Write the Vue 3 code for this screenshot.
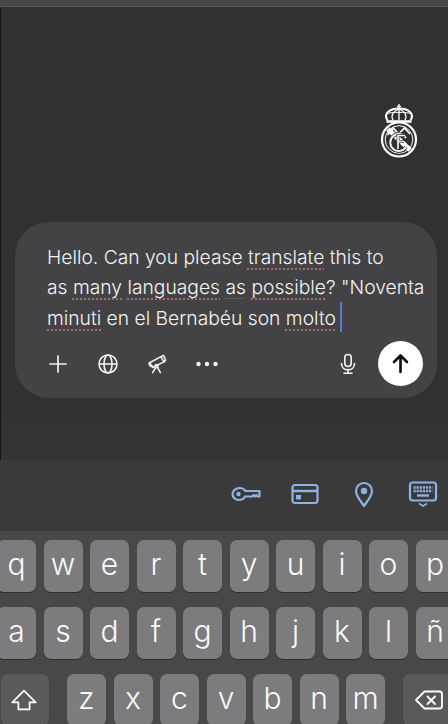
<script setup>
const rowOne = ['q', 'w', 'e', 'r', 't', 'y', 'u', 'i', 'o', 'p']
const rowTwo = ['a', 's', 'd', 'f', 'g', 'h', 'j', 'k', 'l', 'ñ']
const rowThree = ['z', 'x', 'c', 'v', 'b', 'n', 'm']
</script>

<template>
  <div class="screen">
    <div class="top-band"></div>

    <div class="stage">
      <svg class="crest" width="40" height="54" viewBox="0 0 40 54" fill="none" stroke="#fff">
        <!-- crown -->
        <path d="M20 0v5M18 2.500h4" stroke-width="1.400" />
        <path d="M8.500 16.500C4 9 11 4.500 20 4.500S36 9 31.500 16.500" stroke-width="2" />
        <path d="M14 16c-2.500-4.500 0-8.500 6-11 6 2.500 8.500 6.500 6 11M20 5v11" stroke-width="1.300" />
        <path d="M8 9.500c4-1.500 20-1.500 24 0" stroke-width="1" />
        <path d="M7.500 17.500h25" stroke-width="2.600" />
        <!-- badge -->
        <circle cx="20" cy="35.500" r="17" stroke-width="2.200" />
        <circle cx="20" cy="35.500" r="13.800" stroke-width="1" />
        <path d="M9 25l22 21" stroke-width="5" />
        <path d="M8.500 31l6-7 5 6 6-6 5.500 6" stroke-width="1.700" />
        <path d="M27 34a8.500 8.500 0 1 0 0 9" stroke="#323132" stroke-width="3.400" />
        <path d="M27 34a8.500 8.500 0 1 0 0 9" stroke-width="1.800" />
        <path d="M19 45V31.500h7M19 37.500h6" stroke="#323132" stroke-width="3" />
        <path d="M19 45V31.500h7M19 37.500h6" stroke-width="1.600" />
      </svg>

      <div class="composer">
        <p class="message">Hello. Can you please <span class="typo">translate</span> this to<br />as <span class="typo">many</span> <span class="typo">languages</span> <span class="hint">as</span> <span class="typo">possible</span>? "Noventa<br /><span class="typo">minuti</span> en el Bernabéu son <span class="typo">molto</span><i class="caret"></i></p>

        <div class="tools">
          <svg width="24" height="24" viewBox="0 0 24 24" fill="none" stroke="#f2f2f2" stroke-width="1.700" stroke-linecap="round">
            <path d="M12 4v16M4 12h16" />
          </svg>
          <svg width="24" height="24" viewBox="0 0 24 24" fill="none" stroke="#f2f2f2" stroke-width="1.600">
            <circle cx="12" cy="12" r="9" />
            <ellipse cx="12" cy="12" rx="4" ry="9" />
            <path d="M3 12h18" />
          </svg>
          <svg width="24" height="24" viewBox="0 0 24 24" fill="none" stroke="#f2f2f2" stroke-width="1.800" stroke-linejoin="round" stroke-linecap="round">
            <g transform="translate(12 12) scale(.86) translate(-12 -12)">
              <path d="M3.500 10.500l13-7 3.500 6-13 6.500z" />
              <path d="M16.500 3.500l3-1.500 2.500 5.500-2 2" />
              <path d="M3.500 10.500l-1 .8 2 3.500 2-.3" />
              <circle cx="11.500" cy="14.500" r="1.800" />
              <path d="M10.500 16l-3.500 6M12.500 16l3.500 6" />
            </g>
          </svg>
          <svg width="24" height="24" viewBox="0 0 24 24" fill="#f2f2f2">
            <circle cx="3.500" cy="12" r="2.200" />
            <circle cx="12" cy="12" r="2.200" />
            <circle cx="20.500" cy="12" r="2.200" />
          </svg>

          <svg class="mic" width="24" height="24" viewBox="0 0 24 24" fill="none" stroke="#f2f2f2" stroke-width="1.600" stroke-linecap="round">
            <rect x="8.800" y="2.500" width="6.400" height="12" rx="3.200" />
            <path d="M5.500 11.500c0 4 2.800 6.300 6.500 6.300s6.500-2.300 6.500-6.300M12 18v3M8 21.300h8" />
          </svg>
          <button class="send">
            <svg width="24" height="24" viewBox="0 0 24 24" fill="none" stroke="#0c0c0c" stroke-width="2.600" stroke-linecap="round" stroke-linejoin="round">
              <path d="M11.500 20V3.500M5 10L11.500 3.500 18 10" />
            </svg>
          </button>
        </div>
      </div>
    </div>

    <div class="autofill">
      <svg width="30" height="30" viewBox="0 0 30 30" fill="none" stroke="#8fb3e2" stroke-width="2.200" stroke-linejoin="round">
        <path d="M8.500 9c3 0 5 1.300 6 3h14v5.500h-2l-1.200-1.500-1.300 1.500-1.500-1.500-1.500 1.500h-7c-1 2-3 3.500-6 3.500-3.800 0-6.500-2.800-6.500-6S4.700 9 8.500 9z" />
        <circle cx="7.500" cy="15" r="2.200" fill="#8fb3e2" stroke="none" />
      </svg>
      <svg width="30" height="30" viewBox="0 0 30 30" fill="none" stroke="#8fb3e2" stroke-width="2.200">
        <rect x="2.500" y="6" width="25" height="18" rx="2.500" />
        <path d="M2.500 12h25" stroke-width="2.400" />
        <rect x="6" y="16" width="5" height="4.500" fill="#8fb3e2" stroke="none" />
      </svg>
      <svg width="30" height="30" viewBox="0 0 30 30" fill="none" stroke="#8fb3e2" stroke-width="2.200" stroke-linejoin="round">
        <path d="M15 27c-3.500-5.300-8-9.700-8-15a8 8 0 0 1 16 0c0 5.300-4.500 9.700-8 15z" />
        <circle cx="15" cy="12" r="3.200" fill="#8fb3e2" stroke="none" />
      </svg>
      <svg width="30" height="30" viewBox="0 0 30 30" fill="none" stroke="#8fb3e2" stroke-width="2.200">
        <rect x="2" y="3.500" width="26" height="18" rx="2.500" />
        <path d="M5.500 8.500h19M5.500 12h19" stroke-width="2.600" stroke-dasharray="2.200 .9" />
        <path d="M9 16.500h12" stroke-width="2.400" />
        <path d="M11 24.500l4 2.500 4-2.500" stroke-width="1.600" />
      </svg>
    </div>

    <div class="keyboard">
      <div class="row row-one">
        <div v-for="k in rowOne" :key="k" class="key">{{ k }}</div>
      </div>
      <div class="row row-one">
        <div v-for="k in rowTwo" :key="k" class="key">{{ k }}</div>
      </div>
      <div class="row row-three">
        <div class="key action shift">
          <svg width="28" height="28" viewBox="0 0 30 30" fill="none" stroke="#fff" stroke-width="1.800" stroke-linejoin="round">
            <path d="M15 5L2.500 17.500h6.500v7.500h12v-7.500h6.500z" />
          </svg>
        </div>
        <div v-for="k in rowThree" :key="k" class="key">{{ k }}</div>
        <div class="key action erase">
          <svg width="30" height="24" viewBox="0 0 30 24" fill="none" stroke="#fff" stroke-width="1.800" stroke-linejoin="round" stroke-linecap="round">
            <path d="M10.500 3.500h15a2.500 2.500 0 0 1 2.500 2.500v12a2.500 2.500 0 0 1-2.500 2.500h-15L2 12z" />
            <path d="M13.500 8.500l7.500 7.500M21 8.500L13.500 16" />
          </svg>
        </div>
      </div>
    </div>
  </div>
</template>

<style scoped>
.screen {
  width: 448px;
  height: 724px;
  overflow: hidden;
  display: flex;
  flex-direction: column;
  background: #323132;
  font-family: Inter, "Liberation Sans", sans-serif;
}
.top-band {
  height: 6px;
  flex: none;
  background: #47484c;
  border-bottom: 1px solid #58595c;
}
.stage {
  height: 453px;
  flex: none;
  display: flex;
  flex-direction: column;
  border-left: 1px solid #141414;
  background: linear-gradient(#323132 85%, #353435);
}
.crest {
  flex: none;
  align-self: flex-end;
  margin: 97px 29px 0 0;
}
.composer {
  width: 422px;
  height: 176px;
  flex: none;
  box-sizing: border-box;
  margin: 64px 0 0 14px;
  padding: 20px 14px 0 31px;
  border-radius: 34px;
  background: #434244;
}
.message {
  margin: 0 0 0 1px;
  font-size: 19.250px;
  font-weight: 350;
  line-height: 30px;
  color: #f4f4f4;
  white-space: nowrap;
}
.typo {
  text-decoration: underline dotted #a86c6d 1.500px;
  text-underline-offset: 3.500px;
}
.hint {
  text-decoration: underline dotted #77777b 1px;
  text-underline-offset: 3.500px;
}
.caret {
  display: inline-block;
  width: 2px;
  height: 30px;
  margin-left: 4px;
  vertical-align: -7px;
  background: #5c7bd3;
}
.tools {
  display: flex;
  align-items: center;
  gap: 25.500px;
  margin-top: 8px;
}
.mic {
  margin-left: auto;
  margin-right: -7.500px;
}
.send {
  width: 45px;
  height: 45px;
  display: flex;
  align-items: center;
  justify-content: center;
  padding: 0;
  border: none;
  border-radius: 50%;
  background: #fff;
}
.autofill {
  height: 71px;
  flex: none;
  box-sizing: border-box;
  display: flex;
  align-items: center;
  justify-content: flex-end;
  gap: 29px;
  padding: 0 10px 4px 0;
  background: #3a3a3b;
}
.keyboard {
  flex: 1;
  display: flex;
  flex-direction: column;
  gap: 15px;
  padding-top: 9px;
  background: #48474a;
}
.row {
  display: flex;
  gap: 7.500px;
}
.row-one {
  margin-left: -3px;
}
.row-three {
  margin-left: 1px;
}
.key {
  width: 39px;
  height: 52px;
  flex: none;
  display: flex;
  align-items: center;
  justify-content: center;
  padding-bottom: 5px;
  box-sizing: border-box;
  border-radius: 7px;
  background: #7c7b7e;
  box-shadow: 0 1px 0 #2f2e31;
  color: #fafafa;
  font-size: 30px;
  font-weight: 300;
}
.action {
  background: #5a595c;
  padding-bottom: 0;
}
.shift {
  width: 48px;
  margin-right: 10.500px;
  padding-right: 3px;
}
.erase {
  width: 48px;
  margin-left: 10.500px;
  padding-left: 3px;
}
</style>

<style>
html,
body {
  margin: 0;
  background: #323132;
}
</style>
